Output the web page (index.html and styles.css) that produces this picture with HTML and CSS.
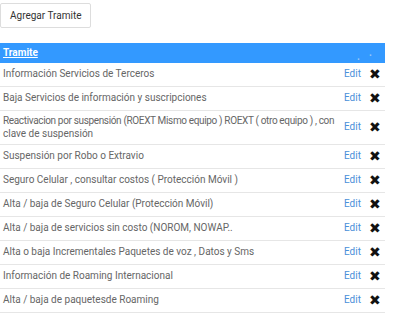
FILE: index.html
```html
<!DOCTYPE html>
<html lang="es">
<head>
    <meta charset="UTF-8">
    <title>Tramites</title>
    <link rel="stylesheet" href="styles.css">
</head>
<body>
<div class="toolbar">
    <button class="btn-add" type="button">Agregar Tramite</button>
</div>
<table class="grid">
    <thead>
    <tr>
        <th class="col-name"><a>Tramite</a></th>
        <th class="col-edit"><a>.</a></th>
        <th class="col-del"><a>.</a></th>
    </tr>
    </thead>
    <tbody>
    <tr><td>Información Servicios de Terceros</td><td class="col-edit"><a>Edit</a></td><td class="col-del"><span class="del">&#x2716;</span></td></tr>
    <tr><td>Baja Servicios de información y suscripciones</td><td class="col-edit"><a>Edit</a></td><td class="col-del"><span class="del">&#x2716;</span></td></tr>
    <tr><td><span class="tight">Reactivacion por suspensión (ROEXT Mismo equipo ) ROEXT ( otro equipo ) , con</span><br>clave de suspensión</td><td class="col-edit"><a>Edit</a></td><td class="col-del"><span class="del">&#x2716;</span></td></tr>
    <tr><td>Suspensión por Robo o Extravio</td><td class="col-edit"><a>Edit</a></td><td class="col-del"><span class="del">&#x2716;</span></td></tr>
    <tr><td>Seguro Celular , consultar costos ( Protección Móvil )</td><td class="col-edit"><a>Edit</a></td><td class="col-del"><span class="del">&#x2716;</span></td></tr>
    <tr><td>Alta / baja de Seguro Celular (Protección Móvil)</td><td class="col-edit"><a>Edit</a></td><td class="col-del"><span class="del">&#x2716;</span></td></tr>
    <tr><td>Alta / baja de servicios sin costo (NOROM, NOWAP..</td><td class="col-edit"><a>Edit</a></td><td class="col-del"><span class="del">&#x2716;</span></td></tr>
    <tr><td>Alta o baja Incrementales Paquetes de voz , Datos y Sms</td><td class="col-edit"><a>Edit</a></td><td class="col-del"><span class="del">&#x2716;</span></td></tr>
    <tr><td>Información de Roaming Internacional</td><td class="col-edit"><a>Edit</a></td><td class="col-del"><span class="del">&#x2716;</span></td></tr>
    <tr><td>Alta / baja de paquetesde Roaming</td><td class="col-edit"><a>Edit</a></td><td class="col-del"><span class="del">&#x2716;</span></td></tr>
    </tbody>
</table>
<div class="pager">
    <a>1</a> <a>2</a> <a>3</a> <a>4</a> <a>5</a>
</div>
</body>
</html>
```

FILE: styles.css
```css
body {
    margin: 0;
    font-family: Roboto, "Liberation Sans", sans-serif;
    font-size: 10px;
    color: #666;
}

.toolbar {
    display: flex;
    padding: 3px 0 15px 0;
}

.btn-add {
    font-family: Roboto, "Liberation Sans", sans-serif;
    font-size: 10px;
    color: #333;
    background: #fff;
    border: 1px solid #ddd;
    border-radius: 2px;
    height: 25px;
    padding: 0 9px;
}

.grid {
    width: 385px;
    table-layout: fixed;
    border-collapse: collapse;
}

.grid th {
    background: #3399ff;
    padding: 0 3px;
    line-height: 18px;
    text-align: left;
    font-weight: bold;
    color: #fff;
}

.grid th a {
    color: #fff;
    text-decoration: underline;
}

.grid th.col-edit,
.grid th.col-del {
    vertical-align: bottom;
    line-height: 12px;
}

.grid th.col-edit a,
.grid th.col-del a {
    text-decoration: none;
    color: #9cc8f5;
}

.grid td {
    padding: 4px 3px;
    line-height: 12.5px;
    border-bottom: 1px solid #e6e6e6;
    vertical-align: middle;
}

.tight {
    white-space: nowrap;
    letter-spacing: -0.35px;
}

.grid .col-edit {
    width: 16px;
    text-align: right;
    padding-right: 6px;
}

.grid .col-edit a {
    color: #4a8fd9;
}

.grid .col-del {
    width: 12px;
    padding: 4px 4px 4px 3px;
}

.del {
    display: block;
    height: 15px;
    line-height: 15px;
    color: #111;
    font-size: 14px;
    font-family: "DejaVu Sans", sans-serif;
}

.pager {
    padding: 7px 0 0 3px;
    color: #4a8fd9;
    font-size: 10px;
}
```
